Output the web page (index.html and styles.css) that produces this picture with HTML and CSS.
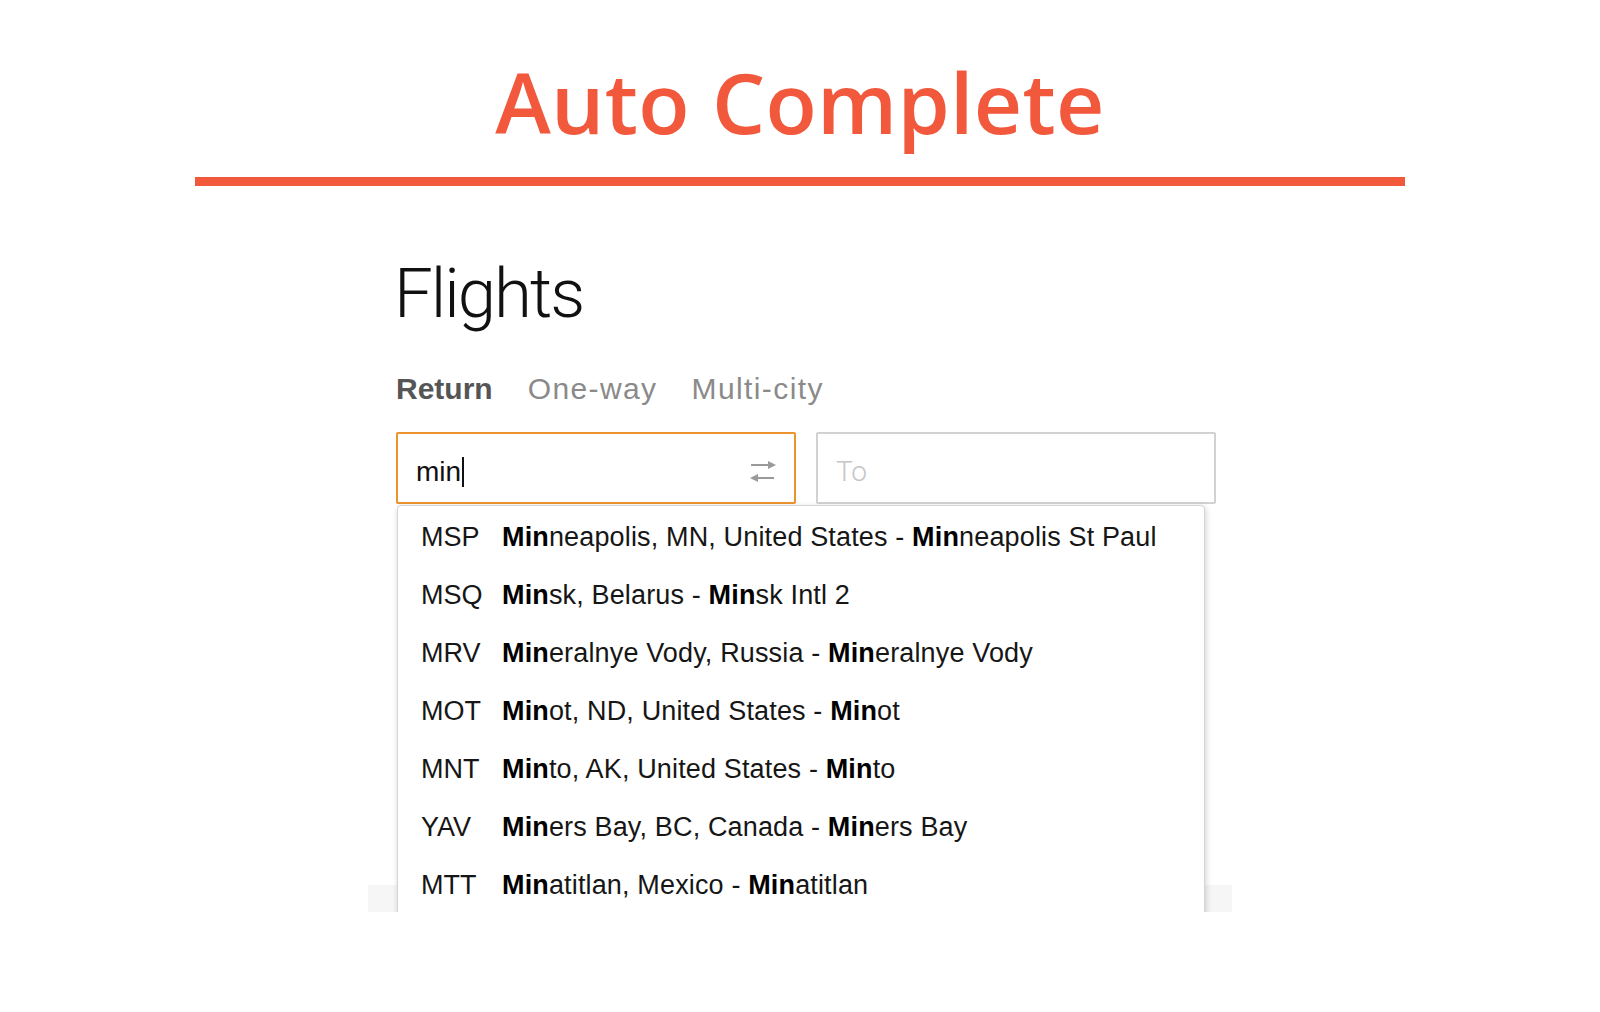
FILE: index.html
```html
<!DOCTYPE html>
<html lang="en">
<head>
<meta charset="utf-8">
<title>Auto Complete</title>
<link rel="stylesheet" href="styles.css">
</head>
<body>
<div class="stage">
  <header class="hero">
    <h1 class="hero-title">Auto Complete</h1>
    <div class="hero-rule"></div>
  </header>

  <section class="flights">
    <h2 class="flights-title">Flights</h2>
    <nav class="tabs">
      <span class="tab tab-active">Return</span>
      <span class="tab">One-way</span>
      <span class="tab">Multi-city</span>
    </nav>
    <div class="fields">
      <div class="field field-from">
        <span class="field-value">min<span class="caret"></span></span>
        <svg class="swap" width="30" height="22" viewBox="0 0 30 22" aria-hidden="true">
          <line x1="3" y1="4" x2="22" y2="4" stroke="#9a9a9a" stroke-width="2"/>
          <polygon points="20,0 28,4 20,8" fill="#9a9a9a"/>
          <line x1="8" y1="17" x2="26" y2="17" stroke="#9a9a9a" stroke-width="2"/>
          <polygon points="10,13 2,17 10,21" fill="#9a9a9a"/>
        </svg>
      </div>
      <div class="field field-to">
        <span class="placeholder">To</span>
      </div>

      <ul class="suggest">
        <li class="suggest-row"><span class="code">MSP</span><span class="name"><b>Min</b>neapolis, MN, United States - <b>Min</b>neapolis St Paul</span></li>
        <li class="suggest-row"><span class="code">MSQ</span><span class="name"><b>Min</b>sk, Belarus - <b>Min</b>sk Intl 2</span></li>
        <li class="suggest-row"><span class="code">MRV</span><span class="name"><b>Min</b>eralnye Vody, Russia - <b>Min</b>eralnye Vody</span></li>
        <li class="suggest-row"><span class="code">MOT</span><span class="name"><b>Min</b>ot, ND, United States - <b>Min</b>ot</span></li>
        <li class="suggest-row"><span class="code">MNT</span><span class="name"><b>Min</b>to, AK, United States - <b>Min</b>to</span></li>
        <li class="suggest-row"><span class="code">YAV</span><span class="name"><b>Min</b>ers Bay, BC, Canada - <b>Min</b>ers Bay</span></li>
        <li class="suggest-row"><span class="code">MTT</span><span class="name"><b>Min</b>atitlan, Mexico - <b>Min</b>atitlan</span></li>
      </ul>
    </div>
  </section>

  <div class="band"></div>
</div>
</body>
</html>
```

FILE: styles.css
```css
* {
  box-sizing: border-box;
}

html, body {
  margin: 0;
  padding: 0;
  background: #ffffff;
}

body {
  font-family: "Liberation Sans", Arial, sans-serif;
  color: #111;
}

.stage {
  height: 912px;
  overflow: hidden;
}

/* Header */
.hero {
  padding-top: 60px;
}

.hero-title {
  margin: 0;
  height: 84px;
  line-height: 84px;
  font-family: "Open Sans", "Noto Sans", sans-serif;
  font-weight: 600;
  font-size: 84px;
  letter-spacing: 0.3px;
  color: #f2583c;
  text-align: center;
}

.hero-rule {
  width: 1210px;
  height: 9px;
  margin: 33px auto 0;
  background: #f2583c;
}

/* Flights section */
.flights {
  width: 864px;
  margin: 0 auto;
  padding: 73px 16px 0 28px;
  position: relative;
  z-index: 2;
}

.flights-title {
  margin: 0 0 0 -2px;
  height: 69px;
  line-height: 69px;
  font-family: Roboto, "Liberation Sans", sans-serif;
  font-weight: 300;
  font-size: 69px;
  letter-spacing: -2px;
  color: #111;
}

.tabs {
  display: flex;
  gap: 34px;
  margin-top: 46px;
  height: 30px;
  line-height: 30px;
  font-size: 30px;
}

.tab {
  color: #8a8a8a;
  letter-spacing: 1.4px;
}

.tab-active {
  color: #555;
  font-weight: 700;
  letter-spacing: 0;
  margin-right: 1px;
}

.fields {
  display: flex;
  gap: 20px;
  margin-top: 28px;
  position: relative;
}

.field {
  width: 400px;
  height: 72px;
  border: 2px solid #d2d2d2;
  border-radius: 2px;
  padding: 7px 18px 0;
  display: flex;
  align-items: center;
  justify-content: space-between;
  font-size: 28px;
  background: #fff;
}

.field-from {
  border-color: #eb942e;
}

.field-value {
  display: flex;
  align-items: center;
  color: #111;
}

.caret {
  display: inline-block;
  width: 2px;
  height: 30px;
  margin-left: 1px;
  background: #111;
}

.swap {
  margin-right: -2px;
}

.placeholder {
  color: #c6c6c6;
  font-family: Roboto, "Liberation Sans", sans-serif;
  font-weight: 300;
}

/* Suggestions dropdown (overlay) */
.suggest {
  position: absolute;
  top: 73px;
  left: 1px;
  width: 808px;
  margin: 0;
  padding: 2px 0 0;
  list-style: none;
  background: #fff;
  border: 1px solid #d4d4d4;
  border-radius: 4px 4px 0 0;
  box-shadow: 1px 2px 6px rgba(0, 0, 0, 0.18);
  min-height: 420px;
}

.suggest-row {
  display: flex;
  height: 58px;
  line-height: 58px;
  font-size: 27px;
  padding-left: 23px;
  white-space: nowrap;
}

.code {
  width: 81px;
  flex: none;
  color: #161616;
}

.name {
  color: #161616;
  letter-spacing: 0.15px;
}

.name b {
  font-weight: 700;
  color: #000;
}

/* Lower section band behind dropdown */
.band {
  width: 864px;
  height: 40px;
  margin: 381px auto 0;
  background: #f6f6f6;
}
```
